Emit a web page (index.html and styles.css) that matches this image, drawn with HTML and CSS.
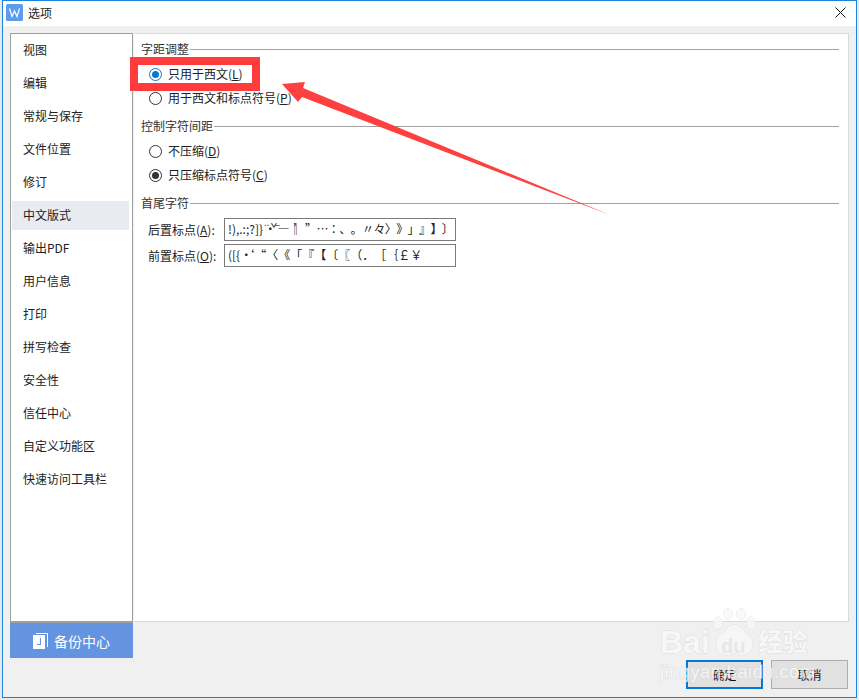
FILE: index.html
```html
<!DOCTYPE html>
<html lang="zh">
<head>
<meta charset="utf-8">
<title>选项</title>
<link rel="stylesheet" href="styles.css">
</head>
<body>
<div class="window">
  <header class="titlebar">
    <svg class="app-icon" width="17" height="17" viewBox="0 0 17 17"><rect width="17" height="17" rx="1.5" fill="#5b9bf0"/><path d="M3.500 4.500 L6 12.500 L8.500 7 L11 12.500 L13.500 4.500" fill="none" stroke="#fff" stroke-width="1.200"/></svg>
    <span class="title">选项</span>
    <svg class="close" width="11" height="11" viewBox="0 0 11 11"><path d="M.5.5l10 10M10.500.5l-10 10" stroke="#111" stroke-width="1"/></svg>
  </header>
  <div class="body">
    <div class="columns">
      <div class="side">
        <nav class="nav">
          <div class="nav-item">视图</div>
          <div class="nav-item">编辑</div>
          <div class="nav-item">常规与保存</div>
          <div class="nav-item">文件位置</div>
          <div class="nav-item">修订</div>
          <div class="nav-item active">中文版式</div>
          <div class="nav-item">输出PDF</div>
          <div class="nav-item">用户信息</div>
          <div class="nav-item">打印</div>
          <div class="nav-item">拼写检查</div>
          <div class="nav-item">安全性</div>
          <div class="nav-item">信任中心</div>
          <div class="nav-item">自定义功能区</div>
          <div class="nav-item">快速访问工具栏</div>
        </nav>
        <div class="backup">
          <svg width="15" height="16" viewBox="0 0 15 16"><path d="M3 0h12v14h-1V1H3z" fill="#fff"/><path fill-rule="evenodd" d="M0 2h12v14H0zM7 5v6H4v1h4V5z" fill="#fff"/></svg>
          <span>备份中心</span>
        </div>
      </div>
      <main class="panel">
        <div class="legend"><span>字距调整</span><i></i></div>
        <label class="radio-row first"><span class="radio on-blue"></span><span>只用于西文(<u>L</u>)</span></label>
        <label class="radio-row"><span class="radio"></span><span>用于西文和标点符号(<u>P</u>)</span></label>
        <div class="legend next"><span>控制字符间距</span><i></i></div>
        <label class="radio-row first"><span class="radio"></span><span>不压缩(<u>D</u>)</span></label>
        <label class="radio-row"><span class="radio on-dark"></span><span>只压缩标点符号(<u>C</u>)</span></label>
        <div class="legend next"><span>首尾字符</span><i></i></div>
        <div class="field-row top"><span class="field-label">后置标点(<u>A</u>):</span><div class="field">!),.:;?]}<span class="tight">¨·ˇˉ―</span>‖<span class="wide closing">’”…∶、。〃々〉》」』】〕</span></div></div>
        <div class="field-row"><span class="field-label">前置标点(<u>O</u>):</span><div class="field">([{·<span class="wide">‘“〈《「『【〔〖（．［｛￡￥</span></div></div>
      </main>
    </div>
    <footer class="actions">
      <button class="btn primary">确定</button>
      <button class="btn">取消</button>
    </footer>
  </div>
</div>
<div class="mark-box"></div>
<svg class="arrow" width="859" height="700" viewBox="0 0 859 700"><path d="M282 84 L305 82 L303 88 L610 215 L302 97 L298 102 Z" fill="#ff4040"/></svg>
<div class="watermark">
  <span class="wm-bai">Bai</span>
  <svg class="wm-paw" width="45" height="48" viewBox="0 0 45 48"><g fill="#f8f8f8" stroke="#dcdcdc"><ellipse cx="6" cy="15" rx="4.500" ry="6"/><ellipse cx="16" cy="6" rx="4.500" ry="5.500"/><ellipse cx="29" cy="6" rx="4.500" ry="5.500"/><ellipse cx="39" cy="15" rx="4.500" ry="6"/><path d="M22.500 17c7 0 8 6 14 10 7 5 5 20-6 20-4 0-5-1.500-8-1.500S18.500 47 14.500 47c-11 0-13-15-6-20 6-4 7-10 14-10z"/></g></svg>
  <span class="wm-du">du</span>
  <span class="wm-cn">经验</span>
  <span class="wm-url">jingyan.baidu.com</span>
</div>
</body>
</html>
```
FILE: styles.css
```css
* { box-sizing: border-box; }
html, body { margin: 0; height: 700px; overflow: hidden; }
body {
  background: #e9e9e9;
  font-family: "Noto Sans CJK SC", "Liberation Sans", sans-serif;
  font-size: 12px;
  color: #222;
  padding-left: 2px;
}
.window {
  width: 855px;
  height: 698px;
  border: 1px solid #1a84dc;
  background: #f0f0f0;
  display: flex;
  flex-direction: column;
}
.titlebar {
  height: 25px;
  flex: none;
  background: #fff;
  display: flex;
  align-items: center;
  padding: 0 10px 2px 3px;
}
.title { margin-left: 5px; font-size: 12px; }
.close { margin-left: auto; }
.body {
  flex: 1;
  display: flex;
  flex-direction: column;
  padding: 7px 7px 9px 7px;
}
.columns { display: flex; height: 625px; }
.side { width: 123px; display: flex; flex-direction: column; }
.nav {
  height: 590px;
  flex: none;
  background: #fff;
  border: 1px solid #a0a0a0;
  border-width: 1px 1px 2px 1px;
}
.nav-item {
  height: 33px;
  line-height: 31px;
  padding-left: 12px;
}
.active {
  background: #e8ebf0;
  margin: 2px 3px 2px 1px;
  height: 29px;
  line-height: 27px;
  padding-left: 11px;
}
.backup {
  height: 35px;
  background: #6493e0;
  color: #fff;
  font-size: 14px;
  display: flex;
  align-items: center;
  justify-content: center;
  gap: 6px;
}
.panel {
  flex: 1;
  margin-left: 1px;
  height: 589px;
  background: #fff;
  border: 1px solid #d9d9d9;
  border-left: 0;
  padding: 0 9px 0 7px;
}
.legend {
  display: flex;
  align-items: center;
  height: 18px;
  margin-top: 6px;
  color: #333;
}
.legend span { padding-right: 1px; line-height: 16px; }
.legend i { flex: 1; height: 1px; background: #a0a0a0; }
.legend.next { margin-top: 7px; }
.radio-row {
  height: 24px;
  display: flex;
  align-items: center;
  padding-left: 8px;
  gap: 6px;
}
.radio-row.first { margin-top: 4px; }
.radio-row > span:last-child { line-height: 16px; }
.radio {
  width: 13px;
  height: 13px;
  flex: none;
  border-radius: 50%;
  border: 1px solid #333;
  background: #fff;
  display: flex;
  align-items: center;
  justify-content: center;
}
.radio::after { content: ""; width: 7px; height: 7px; border-radius: 50%; }
.on-blue { border-color: #0078d7; }
.on-blue::after { background: #0078d7; }
.on-dark::after { background: #333; }
.field-row {
  display: flex;
  align-items: center;
  height: 23px;
  margin-bottom: 3px;
}
.field-row.top { margin-top: 6px; }
.field-label { width: 83px; padding-left: 7px; flex: none; }
.field {
  width: 232px;
  height: 23px;
  border: 1px solid #7a7a7a;
  padding-left: 3px;
  line-height: 19px;
  white-space: nowrap;
  overflow: hidden;
  text-spacing-trim: space-all;
}
.wide { font-variant-east-asian: full-width; font-feature-settings: "fwid" 1, "palt" 0, "chws" 0; margin-left: -10px; }
.wide.closing { margin-left: -8px; letter-spacing: -.6px; }
.tight { letter-spacing: -6px; margin-right: 6px; }
.actions {
  display: flex;
  justify-content: flex-end;
  gap: 8px;
  margin-top: 2px;
  padding-right: 1px;
}
.btn {
  width: 77px;
  height: 29px;
  background: #e1e1e1;
  border: 1px solid #adadad;
  font: inherit;
  color: #111;
  padding: 0;
}
.primary { border: 2px solid #0078d7; }
.mark-box {
  position: absolute;
  left: 130px;
  top: 57px;
  width: 130px;
  height: 34px;
  border: 8px solid #ff3b3b;
}
.arrow { position: absolute; left: 0; top: 0; pointer-events: none; }
.watermark {
  position: absolute;
  left: 660px;
  top: 608px;
  width: 165px;
  height: 75px;
  color: #fafafa;
  font-family: "Liberation Sans", "Noto Sans CJK SC", sans-serif;
  font-weight: 700;
  opacity: .75;
  -webkit-text-stroke: 1px #d8d8d8;
  paint-order: stroke fill;
}
.wm-bai { position: absolute; left: 0; top: 18px; font-size: 32px; line-height: 32px; }
.wm-paw { position: absolute; left: 52px; top: 0; }
.wm-du { position: absolute; left: 61px; top: 28px; font-size: 20px; line-height: 20px; color: #e4e4e4; -webkit-text-stroke: 0; }
.wm-cn { position: absolute; left: 98px; top: 18px; font-size: 25px; line-height: 28px; font-family: "Noto Sans CJK SC", sans-serif; }
.wm-url { position: absolute; left: 0; top: 53px; font-size: 18px; line-height: 22px; letter-spacing: .6px; font-weight: 400; white-space: nowrap; }
```
